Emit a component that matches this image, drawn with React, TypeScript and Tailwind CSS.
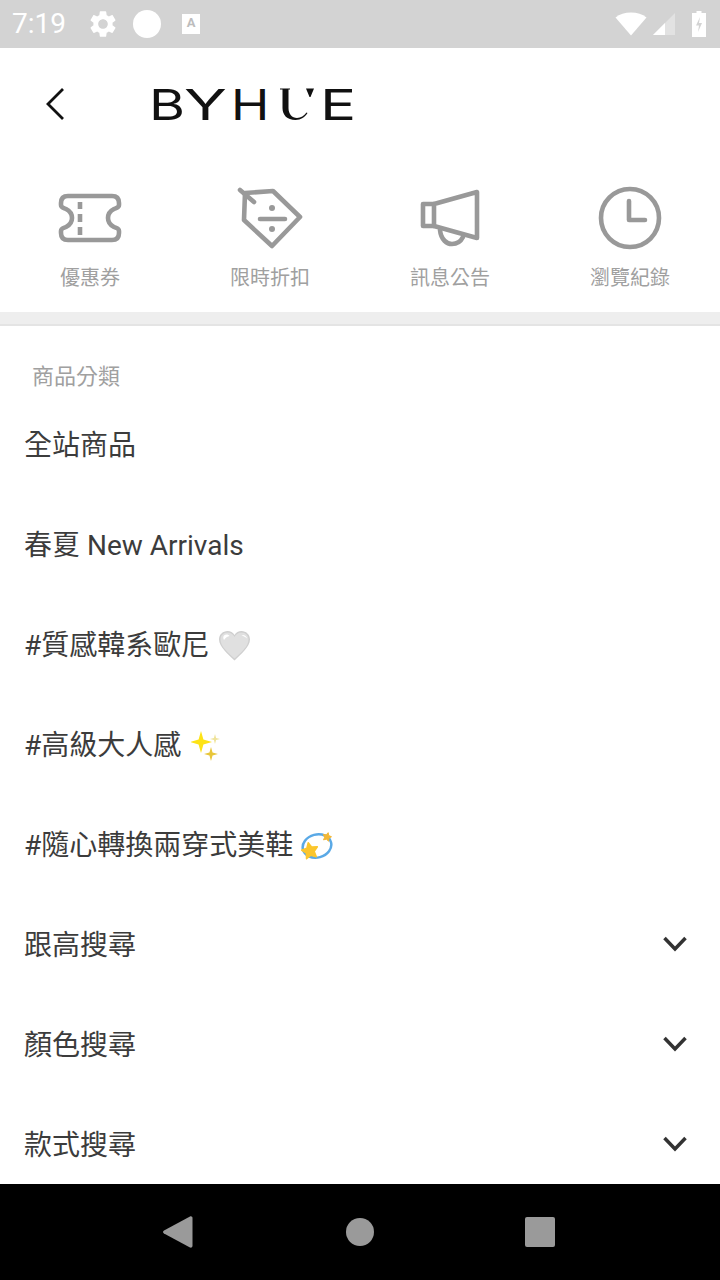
const GEAR = "M19.14 12.94c.04-.3.06-.61.06-.94 0-.32-.02-.64-.07-.94l2.03-1.58c.18-.14.23-.41.12-.61l-1.92-3.32c-.12-.22-.37-.29-.59-.22l-2.39.96c-.5-.38-1.03-.7-1.62-.94l-.36-2.54c-.04-.24-.24-.41-.48-.41h-3.84c-.24 0-.43.17-.47.41l-.36 2.54c-.59.24-1.13.57-1.62.94l-2.39-.96c-.22-.08-.47 0-.59.22L2.74 8.87c-.12.21-.08.47.12.61l2.03 1.58c-.05.3-.09.63-.09.94s.02.64.07.94l-2.03 1.58c-.18.14-.23.41-.12.61l1.92 3.32c.12.22.37.29.59.22l2.39-.96c.5.38 1.03.7 1.62.94l.36 2.54c.05.24.24.41.48.41h3.84c.24 0 .44-.17.47-.41l.36-2.54c.59-.24 1.13-.56 1.62-.94l2.39.96c.22.08.47 0 .59-.22l1.92-3.32c.12-.22.07-.47-.12-.61l-2.01-1.58zM12 15.6c-1.98 0-3.6-1.62-3.6-3.6s1.62-3.6 3.6-3.6 3.6 1.62 3.6 3.6-1.62 3.6-3.6 3.6z";

function StatusBar() {
  return (
    <div className="h-[48px] shrink-0 bg-[#d3d3d3] flex items-center pl-[12px] pr-[14px] text-white">
      <span className="text-[28px] leading-none font-['Roboto'] w-[62px]">7:19</span>
      <svg className="w-[32px] h-[32px] ml-[13px]" viewBox="0 0 24 24" fill="#fff"><path d={GEAR} /></svg>
      <div className="w-[28px] h-[28px] rounded-full bg-white ml-[14px]" />
      <div className="w-[18px] h-[20px] bg-white ml-[21px] flex items-start justify-center">
        <span className="text-[#bdbdbd] text-[13px] leading-[17px] font-bold font-['Roboto']">A</span>
      </div>
      <div className="flex-1" />
      <svg className="w-[32px] h-[24px]" viewBox="0 0 32 24" fill="#fff"><path d="M0.500 5.500C4.500 2 10 0.500 16 0.500s11.500 1.500 15.500 5L16 23.500z" /></svg>
      <svg className="w-[24px] h-[24px] ml-[5px]" viewBox="0 0 24 24"><path d="M1 23L23 1v22z" fill="#fff" fillOpacity="0.35" /><path d="M1 23L13 11v12z" fill="#fff" /></svg>
      <svg className="w-[14px] h-[26px] ml-[16px]" viewBox="0 0 14 26"><path d="M4.500 0h5v2H14v24H0V2h4.500z" fill="#fff" /><path d="M8 6L4 14.500h3L6 21l4-9H7z" fill="#d3d3d3" /></svg>
    </div>
  );
}

function Header() {
  return (
    <div className="h-[112px] shrink-0 bg-white flex items-center">
      <svg className="w-[24px] h-[36px] ml-[44px] shrink-0" viewBox="0 0 24 36" fill="none" stroke="#111" strokeWidth="2.800"><path d="M19 3L4 18l15 15" /></svg>
      <div className="ml-[81px] h-[44px] flex items-center font-['Inter'] text-[#111] text-[43px] leading-none">
        <span className="w-[35px] shrink-0 origin-left scale-x-[1.28]">B</span>
        <span className="w-[47px] shrink-0 origin-left scale-x-[1.47]">Y</span>
        <span className="w-[46px] shrink-0 origin-left scale-x-[1.2]">H</span>
        <span className="relative w-[43px] h-[44px] shrink-0 text-transparent">
          U
          <svg className="absolute left-0 top-0 w-[43px] h-[44px]" viewBox="0 0 43 44" fill="#111">
            <path d="M3 6.500H13V7.500H11.500V26C11.500 32 15 36 20 36C24 36 27 33.500 29.500 30.500L30.500 31C28 35 24 38 18.500 38C10 38 5.500 33 5.500 26V7.500H3Z" />
            <path d="M29 6.500H37L33.500 15H32.500Z" />
          </svg>
        </span>
        <span className="shrink-0 origin-left scale-x-[1.4]">E</span>
      </div>
    </div>
  );
}

function Shortcut({ label, children }: { label: string; children: React.ReactNode }) {
  return (
    <div className="flex flex-col items-center">
      <svg className="w-[80px] h-[72px] mt-[22px]" viewBox="0 0 80 72" fill="none" stroke="#999" strokeWidth="4.600" strokeLinecap="round" strokeLinejoin="round">
        {children}
      </svg>
      <span className="mt-[9px] text-[20px] leading-[30px] text-[#a0a0a0]">{label}</span>
    </div>
  );
}

function Shortcuts() {
  return (
    <div className="h-[152px] shrink-0 grid grid-cols-4 bg-white">
      <Shortcut label="優惠券">
        <path d="M18 14H62Q69 14 69 21V23C69 26 66 26 64 27C60 29 58 32 58 36C58 40 60 43 64 45C66 46 69 46 69 49V51Q69 58 62 58H18Q11 58 11 51V49C11 46 14 46 16 45C20 43 22 40 22 36C22 32 20 29 16 27C14 26 11 26 11 23V21Q11 14 18 14Z" />
        <path d="M30 20v7M30 32v8M30 45v8" strokeLinecap="butt" />
      </Shortcut>
      <Shortcut label="限時折扣">
        <path d="M15 11L43 9L70 35L42 64L14 38Z" />
        <path d="M10 8L24 20M30 37H55" />
        <circle cx="42" cy="26" r="3" fill="#999" stroke="none" />
        <circle cx="42" cy="47" r="3" fill="#999" stroke="none" />
      </Shortcut>
      <Shortcut label="訊息公告">
        <path d="M24 22H13V44H24" />
        <path d="M24 22L67 10V56L24 44Z" />
        <path d="M30 48C31 58 37 62 42 62C47 62 51 59 53 55" />
      </Shortcut>
      <Shortcut label="瀏覽紀錄">
        <circle cx="40" cy="36" r="29" />
        <path d="M39 19V38H55" />
      </Shortcut>
    </div>
  );
}

function Heart() {
  return (
    <svg className="w-[33px] h-[32px]" viewBox="0 0 32 32">
      <path d="M16 30.500C10 24.500 0.500 17 0.500 9.500C0.500 4.500 4.500 1 9 1C12 1 14.500 2.500 16 5C17.500 2.500 20 1 23 1C27.500 1 31.500 4.500 31.500 9.500C31.500 17 22 24.500 16 30.500Z" fill="#cfcfcf" />
      <path d="M16 28.500C10 23 2 16.500 2 9.500C2 5.500 5 2.500 9 2.500C12 2.500 14.500 4 16 7C17.500 4 20 2.500 23 2.500C27 2.500 30 5.500 30 9.500C30 16.500 22 23 16 28.500Z" fill="#e0e0e0" />
      <path d="M5.500 5.500C7.500 4 10 4.500 11 6C9 6.500 7 7.500 5.500 10C4.500 8.500 4.500 6.500 5.500 5.500ZM23 5C26 4.500 28 6 28.500 8.500C26.500 6.500 24.500 6 23 5Z" fill="#fff" />
    </svg>
  );
}

function star4(x: number, y: number, r: number) {
  const k = r * 0.22;
  return `M${x} ${y - r}L${x + k} ${y - k}L${x + r} ${y}L${x + k} ${y + k}L${x} ${y + r}L${x - k} ${y + k}L${x - r} ${y}L${x - k} ${y - k}Z`;
}

function star5(cx: number, cy: number, r: number, rot: number) {
  const pts: string[] = [];
  for (let i = 0; i < 10; i++) {
    const a = ((rot - 90 + i * 36) * Math.PI) / 180;
    const d = i % 2 === 0 ? r : r * 0.5;
    pts.push(`${(cx + d * Math.cos(a)).toFixed(2)} ${(cy + d * Math.sin(a)).toFixed(2)}`);
  }
  return `M${pts.join("L")}Z`;
}

function Sparkles() {
  return (
    <svg className="w-[32px] h-[32px]" viewBox="0 0 32 32">
      <path d={star4(10, 12, 11)} fill="#fde316" />
      <path d={star4(20, 24, 7)} fill="#e8c63a" />
      <path d={star4(24, 9, 5)} fill="#efe39a" />
    </svg>
  );
}

function Dizzy() {
  return (
    <svg className="w-[32px] h-[32px]" viewBox="0 0 32 32" fill="none">
      <ellipse cx="16" cy="16" rx="14.500" ry="11.500" transform="rotate(-15 16 16)" stroke="#5aa9e6" strokeWidth="2.500" />
      <path d={star5(9, 21, 8.500, -12)} fill="#fbc62d" stroke="#fbc62d" strokeWidth="1.500" strokeLinejoin="round" />
      <path d={star5(26, 7, 4.500, 15)} fill="#f3b735" stroke="#f3b735" strokeWidth="1" strokeLinejoin="round" />
    </svg>
  );
}

function Row({ label, icon, expand }: { label: string; icon?: React.ReactNode; expand?: boolean }) {
  return (
    <div className="h-[100px] shrink-0 flex items-center pl-[24px] pr-[33px]">
      <span className="text-[28px] leading-[40px] mt-[2px] text-[#3c3c3c] whitespace-pre">{label}</span>
      {icon}
      <div className="flex-1" />
      {expand && (
        <svg className="w-[24px] h-[16px] -mt-[2px]" viewBox="0 0 24 16" fill="none" stroke="#333" strokeWidth="3.500"><path d="M1.500 2L12 13L22.500 2" /></svg>
      )}
    </div>
  );
}

function NavBar() {
  return (
    <div className="h-[96px] shrink-0 bg-black flex items-center">
      <svg className="w-[30px] h-[32px] ml-[163px]" viewBox="0 0 30 32" fill="#9a9a9a"><path d="M27 0.500C28.500 0 29.500 1 29.500 2V30C29.500 31 28.500 32 27 31.500L1 17.500C-0.300 16.500-0.300 15.500 1 14.500Z" /></svg>
      <div className="w-[28px] h-[28px] rounded-full bg-[#9a9a9a] ml-[153px]" />
      <div className="w-[30px] h-[30px] rounded-[2px] bg-[#9a9a9a] ml-[151px]" />
    </div>
  );
}

export default function App() {
  return (
    <div className="w-[720px] h-[1280px] flex flex-col bg-white overflow-hidden font-['Roboto','Noto_Sans_CJK_TC',sans-serif]">
      <StatusBar />
      <Header />
      <Shortcuts />
      <div className="h-[14px] shrink-0 bg-[#eeeeee] border-b-2 border-[#e4e4e4]" />
      <div className="flex-1 min-h-0 overflow-hidden flex flex-col">
        <div className="h-[69px] shrink-0 flex items-end pl-[32px]">
          <span className="text-[22px] leading-[34px] text-[#a0a0a0] mb-[1px]">商品分類</span>
        </div>
        <Row label="全站商品" />
        <Row label="春夏 New Arrivals" />
        <Row label="#質感韓系歐尼" icon={<span className="ml-[9px] mt-[1px]"><Heart /></span>} />
        <Row label="#高級大人感" icon={<span className="ml-[10px] mt-[1px]"><Sparkles /></span>} />
        <Row label="#隨心轉換兩穿式美鞋" icon={<span className="ml-[8px] mt-[1px]"><Dizzy /></span>} />
        <Row label="跟高搜尋" expand />
        <Row label="顏色搜尋" expand />
        <Row label="款式搜尋" expand />
      </div>
      <NavBar />
    </div>
  );
}
